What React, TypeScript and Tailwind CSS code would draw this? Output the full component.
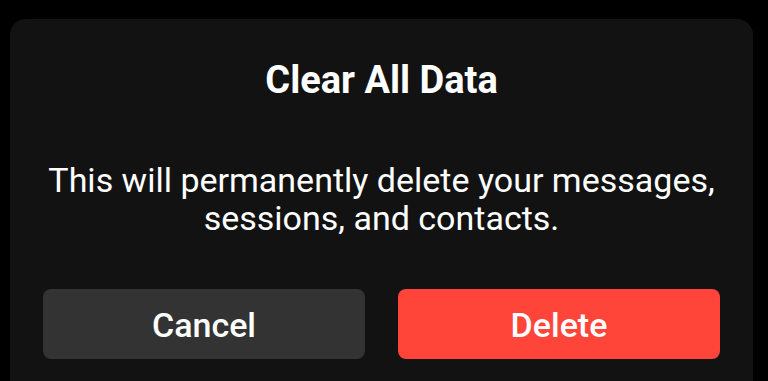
export default function App() {
  return (
    <div className="h-[381px] w-[768px] overflow-hidden bg-black pt-[19px] pl-[10px] font-['Roboto',sans-serif]">
      <div className="w-[743px] h-[420px] rounded-[16px] bg-[#121212] px-[33px] pt-[38px]">
        {/* Title */}
        <h2 className="text-center text-[38px] leading-[46px] font-bold text-white">
          Clear All Data
        </h2>

        {/* Message */}
        <p className="mt-[58px] text-center text-[34px] leading-[38px] text-white">
          This will permanently delete your messages,
          <br />
          sessions, and contacts.
        </p>

        {/* Actions */}
        <div className="mt-[52px] flex gap-[33px]">
          <button className="h-[70px] flex-1 rounded-[8px] bg-[#333333] pt-[3px] text-[34px] font-medium text-white">
            Cancel
          </button>
          <button className="h-[70px] flex-1 rounded-[8px] bg-[#ff453a] pt-[3px] text-[34px] font-medium text-white">
            Delete
          </button>
        </div>
      </div>
    </div>
  );
}
